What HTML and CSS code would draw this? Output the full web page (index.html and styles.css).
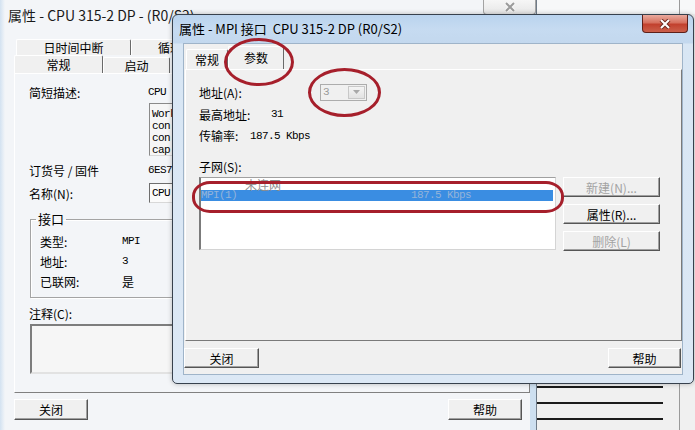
FILE: index.html
```html
<!DOCTYPE html>
<html lang="zh-CN">
<head>
  <meta charset="UTF-8">
  <meta name="viewport" content="width=device-width, initial-scale=1.0">
  <title>属性 - MPI 接口</title>
  <link rel="stylesheet" href="styles.css">
</head>
<body>

<!-- window that sits behind everything on the right -->
<div class="far-win">
  <div class="far-pane">
    <div class="far-list">
      <div class="far-row"></div>
      <div class="far-row"></div>
      <div class="far-row far-row-last"></div>
    </div>
  </div>
</div>

<!-- CPU properties dialog (inactive, mostly covered) -->
<div class="win-back">
  <div class="win-title">属性 - CPU 315-2 DP - (R0/S2)</div>
  <span class="close-btn close-off">
    <svg viewBox="0 0 16 10"><path class="x-out" d="M4 1l8 8M12 1l-8 8"/><path class="x-in" d="M4 1l8 8M12 1l-8 8"/></svg>
  </span>
  <div class="client">
    <div class="tabrow tabrow-rear">
      <span class="tab tab-tod">日时间中断</span>
      <span class="tab tab-cycle">循环</span>
    </div>
    <div class="tabrow tabrow-main">
      <span class="tab tab-on tab-general">常规</span>
      <span class="tab tab-startup">启动</span>
    </div>
    <div class="page page-cpu">
      <div class="field f-desc"><span class="lbl">简短描述:</span><span class="mono">CPU</span></div>
      <div class="field f-memo">
        <span class="lbl"></span>
        <div class="memo mono">
          <div>Work</div>
          <div>con</div>
          <div>con</div>
          <div>cap</div>
        </div>
      </div>
      <div class="field f-order"><span class="lbl">订货号 / 固件</span><span class="mono">6ES7</span></div>
      <div class="field f-name"><span class="lbl">名称(N):</span><span class="edit mono">CPU</span></div>
      <fieldset class="group">
        <legend>接口</legend>
        <div class="grow"><span class="glbl">类型:</span><span class="mono">MPI</span></div>
        <div class="grow"><span class="glbl">地址:</span><span class="mono">3</span></div>
        <div class="grow"><span class="glbl">已联网:</span><span>是</span></div>
      </fieldset>
      <div class="field f-comment"><span class="lbl">注释(C):</span></div>
      <div class="memo-comment"></div>
    </div>
    <div class="footer footer-back">
      <button class="btn btn-back">关闭</button>
      <button class="btn btn-back">帮助</button>
    </div>
  </div>
</div>

<!-- MPI interface properties dialog (active) -->
<div class="win-front">
  <div class="win-title">属性 - MPI 接口&nbsp; CPU 315-2 DP (R0/S2)</div>
  <span class="close-btn close-on">
    <svg viewBox="0 0 16 10"><path class="x-out" d="M4 1l8 8M12 1l-8 8"/><path class="x-in" d="M4 1l8 8M12 1l-8 8"/></svg>
  </span>
  <div class="client client-front">
    <div class="tabrow tabrow-mpi">
      <span class="tab tab-mgeneral">常规</span>
      <span class="tab tab-on tab-params">参数</span>
    </div>
    <div class="page page-mpi">
      <div class="prow prow-addr">
        <span class="plbl w-addr">地址(A):</span>
        <span class="combo">
          <span class="combo-val mono">3</span>
          <span class="combo-arrow"><svg viewBox="0 0 7 4"><path d="M0 0h7L3.5 4z"/></svg></span>
        </span>
      </div>
      <div class="prow prow-max"><span class="plbl w-max">最高地址:</span><span class="mono">31</span></div>
      <div class="prow prow-rate"><span class="plbl w-rate">传输率:</span><span class="mono">187.5 Kbps</span></div>
      <div class="prow prow-sub">子网(S):</div>
      <div class="subnet">
        <div class="listbox">
          <div class="item item-none">未连网</div>
          <div class="item item-sel"><span class="item-name mono">MPI(1)</span><span class="mono">187.5 Kbps</span></div>
        </div>
        <div class="side-btns">
          <button class="btn btn-side" disabled>新建(N)...</button>
          <button class="btn btn-side">属性(R)...</button>
          <button class="btn btn-side" disabled>删除(L)</button>
        </div>
      </div>
    </div>
    <div class="footer footer-front">
      <button class="btn btn-close">关闭</button>
      <button class="btn btn-help">帮助</button>
    </div>
  </div>
</div>

<!-- red hand-drawn marks -->
<div class="mark mark-tab"></div>
<div class="mark mark-addr"></div>
<div class="mark mark-net"></div>

</body>
</html>
```

FILE: styles.css
```css
body {
  margin: 0;
  width: 695px;
  height: 430px;
  overflow: hidden;
  position: relative;
  background: #f0f0f0;
  font-family: "Noto Sans CJK SC", "Noto Sans", sans-serif;
  font-size: 12px;
  color: #000;
}
.mono {
  font-family: "Liberation Mono", "Noto Sans CJK SC", monospace;
  font-size: 11px;
  letter-spacing: -0.6px;
}

/* far window */
.far-win {
  position: absolute;
  left: 537px;
  top: 0;
  width: 158px;
  height: 430px;
  background: linear-gradient(180deg, #f7f8f9 0, #f7f8f9 14px, #f0f0f0 14px);
}
.far-pane {
  width: 143px;
  height: 430px;
  box-sizing: border-box;
  padding-top: 386px;
  border-right: 1px solid #9a9a9a;
}
.far-list {
  width: 126px;
}
.far-row {
  height: 14px;
  border-top: 2px solid #1b1b1b;
}
.far-row-last {
  height: 10px;
}

/* generic window parts */
.win-title {
  height: 30px;
  line-height: 30px;
  padding-left: 8px;
  font-size: 13px;
  white-space: nowrap;
  color: #1a1a1a;
}
.close-btn {
  position: absolute;
  top: 0;
  box-sizing: border-box;
  display: flex;
  align-items: center;
  justify-content: center;
  border-radius: 0 0 4px 4px;
}
.close-btn svg {
  width: 16px;
  height: 10px;
}
.x-out {
  fill: none;
  stroke-width: 4;
}
.x-in {
  fill: none;
  stroke-width: 2;
}
.close-off {
  left: 483px;
  width: 53px;
  height: 15px;
  border: 1px solid #a3a3a3;
  border-top: none;
  background: linear-gradient(#f6f6f6, #e6e6e6);
}
.close-off .x-out { stroke: #f8f8f8; }
.close-off .x-in { stroke: #9b9b9b; }
.close-on {
  left: 469px;
  width: 46px;
  height: 18px;
  border: 1px solid #5e2019;
  border-top: none;
  background: linear-gradient(#e9aa9e 0, #d6705e 45%, #c2412e 55%, #cb604b 100%);
}
.close-on .x-out { stroke: #6d2a22; }
.close-on .x-in { stroke: #fff; }

.tabrow {
  display: flex;
  align-items: flex-end;
}
.tab {
  box-sizing: border-box;
  text-align: center;
  white-space: nowrap;
  overflow: hidden;
  border: 1px solid;
  border-color: #fff #6a6a6a transparent #fff;
  border-bottom: none;
  border-radius: 2px 2px 0 0;
  background: #f0f0f0;
}

.btn {
  box-sizing: border-box;
  padding: 0;
  font-family: "Noto Sans CJK SC", sans-serif;
  font-size: 12px;
  color: #000;
  background: #f0f0f0;
  border: 1px solid;
  border-color: #fff #555 #555 #fff;
  box-shadow: inset -1px -1px 0 #a0a0a0;
}
.btn:disabled {
  color: #a3a3a3;
}

/* back dialog */
.win-back {
  position: absolute;
  left: 0;
  top: 0;
  width: 537px;
  height: 430px;
  box-sizing: border-box;
  border-right: 1px solid #6f7b88;
  background: linear-gradient(90deg, #d3e2f1 0, #f3f5f8 5px, #f3f5f8 530px, #cddff0 530px);
}
.win-back .win-title {
  font-size: 14px;
}
.client {
  margin-left: 14px;
  width: 516px;
}
.tabrow-rear {
  margin-top: 9px;
  height: 16px;
  padding-left: 2px;
}
.tab-tod {
  width: 115px;
  height: 16px;
  line-height: 15px;
}
.tab-cycle {
  width: 140px;
  height: 16px;
  line-height: 15px;
  text-align: left;
  padding-left: 26px;
}
.tabrow-main {
  height: 18px;
}
.tab-general {
  width: 89px;
  height: 18px;
  line-height: 17px;
}
.tab-startup {
  width: 67px;
  height: 16px;
  line-height: 15px;
}
.page-cpu {
  box-sizing: border-box;
  height: 320px;
  border: 1px solid;
  border-color: #fff #808080 #808080 #fff;
  padding-left: 14px;
}
.field {
  display: flex;
  align-items: center;
}
.lbl {
  width: 119px;
  flex: none;
}
.f-desc {
  margin-top: 9px;
  height: 18px;
}
.f-memo {
  margin-top: 2px;
  align-items: flex-start;
}
.memo {
  margin-left: 1px;
  width: 360px;
  height: 53px;
  box-sizing: border-box;
  overflow: hidden;
  border: 1px solid;
  border-color: #8a8a8a #d8d8d8 #d8d8d8 #8a8a8a;
  background: #f6f6f6;
  padding: 4px 0 0 2px;
  line-height: 12px;
  white-space: nowrap;
}
.f-order {
  margin-top: 5px;
  height: 18px;
}
.f-name {
  margin-top: 4px;
  height: 20px;
}
.edit {
  margin-left: 1px;
  width: 360px;
  height: 20px;
  box-sizing: border-box;
  border: 1px solid;
  border-color: #6e6e6e #d8d8d8 #d8d8d8 #6e6e6e;
  background: #fbfbfb;
  line-height: 18px;
  padding-left: 2px;
}
.group {
  margin: 8px 0 0 1px;
  width: 488px;
  padding: 4px 0 6px 9px;
  border: 1px solid #a4a4a4;
  box-shadow: 1px 1px 0 #fff, inset 1px 1px 0 #fff;
}
.group legend {
  margin-left: -4px;
  padding: 0 2px;
  line-height: 16px;
  font-size: 13px;
}
.grow {
  display: flex;
  align-items: center;
  height: 20px;
}
.glbl {
  width: 82px;
  flex: none;
}
.f-comment {
  margin-top: 6px;
  height: 18px;
}
.memo-comment {
  margin: 2px 0 0 1px;
  width: 486px;
  height: 50px;
  box-sizing: border-box;
  border: 2px solid;
  border-color: #7d7d7d #e2e2e2 #e2e2e2 #7d7d7d;
  background: #f6f6f6;
}
.footer {
  display: flex;
  justify-content: space-between;
}
.footer-back {
  padding: 6px 8px 0 0;
}
.btn-back {
  width: 74px;
  height: 21px;
}

/* front dialog */
.win-front {
  position: absolute;
  left: 172px;
  top: 14px;
  width: 522px;
  height: 370px;
  box-sizing: border-box;
  border: 1px solid #37414d;
  border-radius: 6px 6px 5px 5px;
  background: linear-gradient(180deg, #b9d3ee 0, #c6dbf1 14px, #c3d8ee 28px, #d8e6f4 29px, #dce8f5 100%);
  box-shadow: 0 0 5px rgba(0, 0, 0, 0.25);
}
.win-front .win-title {
  height: 28px;
  line-height: 28px;
  padding-left: 6px;
  color: #000;
}
.client-front {
  margin: 0 10px;
  width: 500px;
  height: 332px;
  box-sizing: border-box;
  background: #f0f0f0;
  border: 1px solid #9fb4c9;
}
.tabrow-mpi {
  height: 25px;
  padding-left: 2px;
}
.tab-mgeneral {
  width: 42px;
  height: 20px;
  line-height: 19px;
}
.tab-params {
  width: 56px;
  height: 23px;
  line-height: 21px;
}
.page-mpi {
  margin-left: 1px;
  width: 497px;
  height: 272px;
  box-sizing: border-box;
  border: 1px solid;
  border-color: #fff #7a7a7a #7a7a7a #fff;
  padding-left: 13px;
}
.prow {
  display: flex;
  align-items: center;
}
.plbl {
  flex: none;
}
.prow-addr {
  margin-top: 11px;
  height: 22px;
}
.prow-max {
  height: 22px;
}
.prow-rate {
  height: 21px;
}
.prow-sub {
  margin-top: 11px;
  height: 18px;
}
.w-addr { width: 121px; }
.w-max { width: 72px; }
.w-rate { width: 51px; }
.combo {
  display: flex;
  align-items: center;
  justify-content: space-between;
  width: 47px;
  height: 17px;
  box-sizing: border-box;
  border: 1px solid #acacac;
  background: #f0f0f0;
  padding: 0 1px 0 2px;
}
.combo-val {
  color: #9a9a9a;
}
.combo-arrow {
  display: flex;
  align-items: center;
  justify-content: center;
  width: 17px;
  height: 13px;
  box-sizing: border-box;
  border: 1px solid #c8c8c8;
  background: linear-gradient(#f4f4f4, #e2e2e2);
}
.combo-arrow svg {
  width: 7px;
  height: 4px;
  fill: #a8a8a8;
}
.subnet {
  display: flex;
  margin-top: 2px;
}
.listbox {
  width: 357px;
  height: 73px;
  box-sizing: border-box;
  border-style: solid;
  border-width: 1px 1px 1px 2px;
  border-color: #a0a0a0 #d4d4d4 #d4d4d4 #7b7b7b;
  background: #fff;
}
.item {
  white-space: nowrap;
}
.item-none {
  height: 12px;
  line-height: 13px;
  padding-left: 44px;
  color: #8c8c8c;
}
.item-sel {
  display: flex;
  height: 11px;
  line-height: 11px;
  margin-right: 2px;
  background: #3a8de2;
  color: #93b3d9;
}
.item-name {
  width: 210px;
}
.side-btns {
  display: flex;
  flex-direction: column;
  gap: 7px;
  margin-left: 7px;
}
.btn-side {
  width: 97px;
  height: 20px;
}
.footer-front {
  padding: 7px 1px 0 0;
}
.btn-close {
  width: 75px;
  height: 20px;
}
.btn-help {
  width: 73px;
  height: 20px;
}

/* red hand-drawn marks */
.mark {
  position: absolute;
  box-sizing: border-box;
  border: 3px solid #a61f2b;
  border-radius: 50%;
}
.mark-tab {
  left: 224px;
  top: 38px;
  width: 70px;
  height: 48px;
}
.mark-addr {
  left: 308px;
  top: 68px;
  width: 73px;
  height: 49px;
}
.mark-net {
  left: 192px;
  top: 181px;
  width: 372px;
  height: 32px;
  border-radius: 18px / 15px;
}
```
